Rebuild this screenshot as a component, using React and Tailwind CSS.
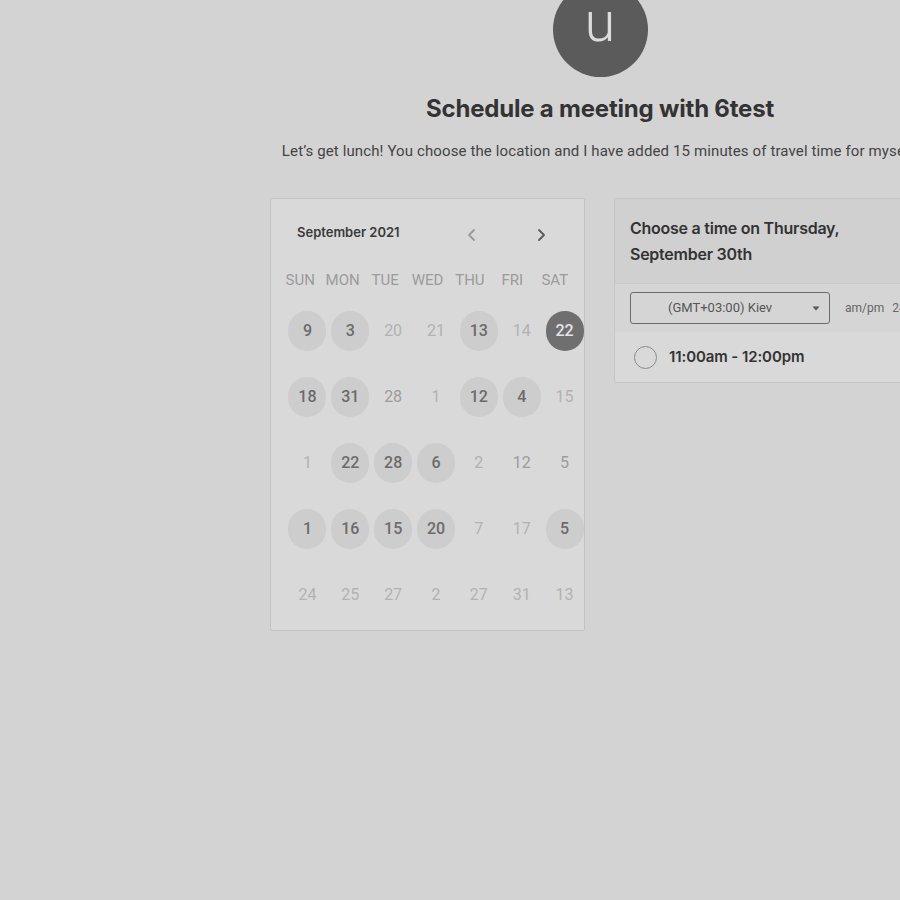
import React from "react";

const rows = [
  [["9", "a"], ["3", "a"], ["20", "u"], ["21", "u"], ["13", "a"], ["14", "u"], ["22", "s"]],
  [["18", "a"], ["31", "a"], ["28", "m"], ["1", "u"], ["12", "a"], ["4", "a"], ["15", "u"]],
  [["1", "u"], ["22", "a"], ["28", "a"], ["6", "a"], ["2", "u"], ["12", "m"], ["5", "m"]],
  [["1", "a"], ["16", "a"], ["15", "a"], ["20", "a"], ["7", "u"], ["17", "u"], ["5", "a"]],
  [["24", "u"], ["25", "u"], ["27", "u"], ["2", "u"], ["27", "u"], ["31", "u"], ["13", "u"]],
];

const heads = ["SUN", "MON", "TUE", "WED", "THU", "FRI", "SAT"];

function Day({ n, t }) {
  if (t === "s") {
    return (
      <div className="w-[38px] h-[40px] rounded-full bg-[#6f6f6f] flex items-center justify-center text-[16px] font-medium text-[#e4e4e4]">
        {n}
      </div>
    );
  }
  if (t === "a") {
    return (
      <div className="w-[38px] h-[40px] rounded-full bg-[#cdcdcd] flex items-center justify-center text-[16px] font-medium text-[#6b6b6b]">
        {n}
      </div>
    );
  }
  return (
    <div
      className={
        "w-[38px] h-[40px] flex items-center justify-center text-[16px] " +
        (t === "m" ? "text-[#9c9c9c]" : "text-[#b2b2b2]")
      }
    >
      {n}
    </div>
  );
}

export default function App() {
  return (
    <div className="w-[900px] h-[900px] overflow-hidden bg-[#d3d3d3] font-['Roboto',sans-serif]">
      <div className="w-[1200px] flex flex-col items-center">
        <div className="w-[95px] h-[95px] -mt-[18px] rounded-full bg-[#5b5b5b] flex items-center justify-center">
          <span className="text-[56px] font-light text-[#dcdcdc] leading-none -mt-[16px]">u</span>
        </div>
        <h1 className="mt-[17px] font-['Inter',sans-serif] font-bold text-[24px] leading-[30px] text-[#333333] tracking-[-0.2px]">
          Schedule a meeting with 6test
        </h1>
        <p className="mt-[17px] text-[15px] leading-[20px] text-[#444444] whitespace-nowrap tracking-[0.12px]">
          Let’s get lunch! You choose the location and I have added 15 minutes of travel time for myself.
        </p>

        <div className="mt-[37px] flex gap-[29px] items-start">
          {/* Calendar */}
          <div className="w-[315px] h-[433px] border border-[#c3c3c3] rounded-[2px] bg-[#d9d9d9]">
            <div className="mt-[18px] h-[36px] flex items-center">
              <span className="ml-[26px] mb-[4px] font-['Inter',sans-serif] font-semibold text-[13px] text-[#3a3a3a]">
                September 2021
              </span>
              <svg className="ml-[63px]" width="18" height="18" viewBox="0 0 18 18" fill="none">
                <path d="M11 4 L6 9 L11 14" stroke="#9a9a9a" strokeWidth="1.8" strokeLinecap="round" strokeLinejoin="round" />
              </svg>
              <svg className="ml-[51px]" width="18" height="18" viewBox="0 0 18 18" fill="none">
                <path d="M7 4 L12 9 L7 14" stroke="#5a5a5a" strokeWidth="1.8" strokeLinecap="round" strokeLinejoin="round" />
              </svg>
            </div>
            <div className="mt-[16px] ml-[8px] w-[297px] grid grid-cols-7 h-[20px] items-center">
              {heads.map((h) => (
                <div key={h} className="text-center text-[15px] text-[#9b9b9b]">
                  {h}
                </div>
              ))}
            </div>
            <div className="mt-[9px] ml-[15px] w-[300px] flex flex-col">
              {rows.map((r, i) => (
                <div key={i} className="grid grid-cols-7 h-[66px] items-center justify-items-center">
                  {r.map(([n, t], j) => (
                    <Day key={j} n={n} t={t} />
                  ))}
                </div>
              ))}
            </div>
          </div>

          {/* Time panel */}
          <div className="w-[316px] border border-[#c6c6c6] rounded-[2px] overflow-hidden">
            <div className="bg-[#d0d0d0] px-[15px] pt-[16px] pb-[16px] border-b border-[#c9c9c9] font-['Inter',sans-serif] font-semibold text-[16px] leading-[26px] text-[#333333] tracking-[-0.25px]">
              <div>Choose a time on Thursday,</div>
              <div>September 30th</div>
            </div>
            <div className="bg-[#d5d5d5] h-[48px] flex items-center pl-[15px]">
              <div className="w-[200px] h-[32px] border border-[#6a6a6a] rounded-[3px] flex items-center">
                <span className="ml-[37px] text-[13px] text-[#555555]">(GMT+03:00) Kiev</span>
                <svg className="ml-[40px]" width="8" height="5" viewBox="0 0 8 5">
                  <path d="M0.5 0.5 L7.5 0.5 L4 4.5 Z" fill="#555555" />
                </svg>
              </div>
              <span className="ml-[15px] text-[12px] text-[#666666]">am/pm</span>
              <span className="ml-[8px] text-[12px] text-[#666666]">24h</span>
            </div>
            <div className="bg-[#d9d9d9] h-[50px] flex items-center pl-[19px]">
              <div className="w-[23px] h-[23px] rounded-full border-[1.5px] border-[#8a8a8a]" />
              <span className="ml-[12px] font-['Inter',sans-serif] font-semibold text-[15px] text-[#333333] tracking-[-0.1px]">
                11:00am - 12:00pm
              </span>
            </div>
          </div>
        </div>
      </div>
    </div>
  );
}
